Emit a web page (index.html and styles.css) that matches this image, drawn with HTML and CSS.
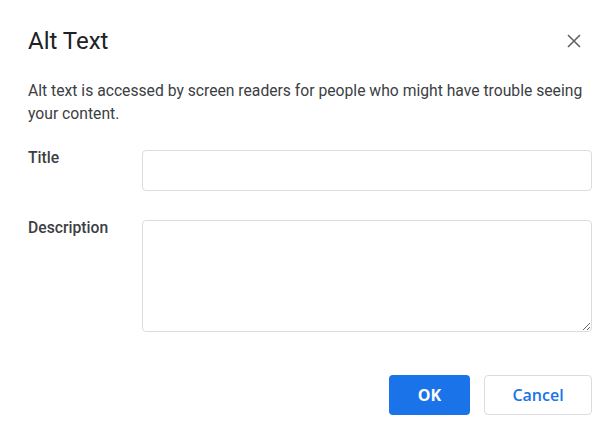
FILE: index.html
```html
<!DOCTYPE html>
<html lang="en">
<head>
<meta charset="utf-8">
<title>Alt Text</title>
<link rel="stylesheet" href="styles.css">
</head>
<body>
<div class="dialog">
  <div class="header">
    <h1 class="title">Alt Text</h1>
    <button class="close" aria-label="Close">
      <svg width="14" height="14" viewBox="0 0 14 14"><path d="M1 1L13 13M13 1L1 13" stroke="#5f6368" stroke-width="1.6" fill="none"/></svg>
    </button>
  </div>
  <p class="intro">Alt text is accessed by screen readers for people who might have trouble seeing your content.</p>
  <div class="row">
    <label class="label" for="t">Title</label>
    <input class="field" id="t" type="text">
  </div>
  <div class="row row-desc">
    <label class="label" for="d">Description</label>
    <textarea class="field area" id="d"></textarea>
  </div>
  <div class="actions">
    <button class="btn btn-primary">OK</button>
    <button class="btn btn-secondary">Cancel</button>
  </div>
</div>
</body>
</html>
```
FILE: styles.css
```css
html, body {
  margin: 0;
  padding: 0;
  background: #ffffff;
}
body {
  font-family: Roboto, "Liberation Sans", sans-serif;
  color: #3c4043;
}
.dialog {
  width: 616px;
  height: 439px;
  box-sizing: border-box;
  padding: 24px 24px 0 28px;
}
.header {
  display: flex;
  align-items: center;
  justify-content: space-between;
  height: 34px;
}
.title {
  margin: 0;
  font-size: 24px;
  font-weight: 400;
  color: #202124;
  line-height: 34px;
}
.close {
  border: none;
  background: none;
  padding: 0;
  width: 14px;
  height: 14px;
  margin-right: 11px;
  display: flex;
}
.intro {
  margin: 21px 0 0 0;
  font-size: 15.7px;
  line-height: 23px;
  color: #3c4043;
}
.row {
  display: flex;
  align-items: flex-start;
  margin-top: 25px;
}
.row-desc {
  margin-top: 29px;
}
.label {
  width: 114px;
  flex: none;
  font-size: 15.7px;
  font-weight: 500;
  color: #3c4043;
  line-height: 16px;
}
.field {
  width: 450px;
  height: 41px;
  box-sizing: border-box;
  border: 1px solid #dadce0;
  border-radius: 4px;
  margin: 0;
  padding: 8px;
  font-family: inherit;
  font-size: 14px;
  outline: none;
}
.area {
  height: 112px;
  resize: both;
  display: block;
}
.actions {
  display: flex;
  justify-content: flex-end;
  gap: 14px;
  margin-top: 43px;
}
.btn {
  height: 40px;
  border-radius: 4px;
  font-family: "Open Sans", sans-serif;
  font-size: 16px;
  cursor: pointer;
  box-sizing: border-box;
}
.btn-primary {
  width: 81px;
  background: #1a73e8;
  color: #ffffff;
  border: none;
  font-weight: 700;
}
.btn-secondary {
  width: 108px;
  background: #ffffff;
  color: #1a73e8;
  border: 1px solid #dadce0;
  font-weight: 600;
}
```
